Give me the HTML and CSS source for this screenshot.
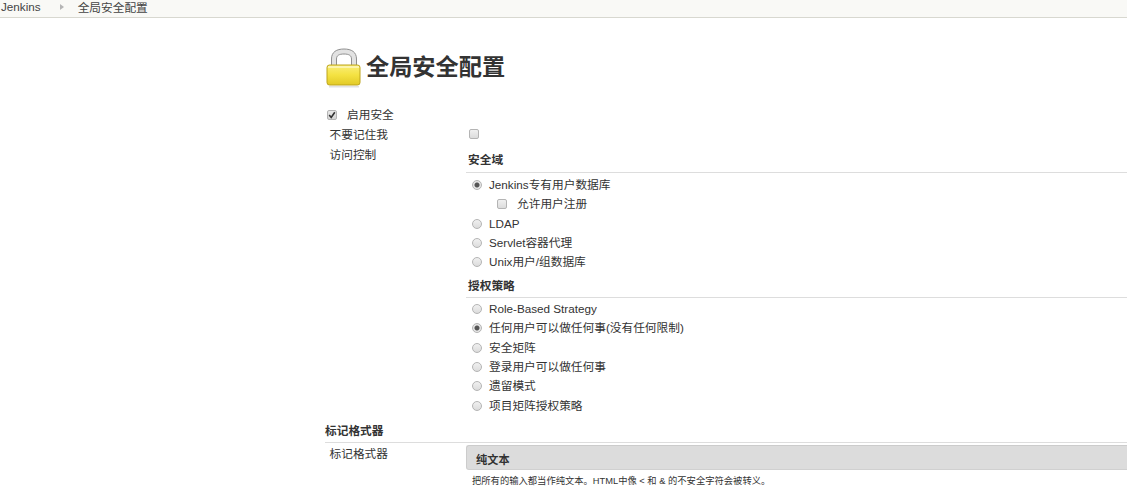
FILE: index.html
```html
<!DOCTYPE html>
<html lang="zh-CN">
<head>
  <meta charset="UTF-8">
  <title>全局安全配置</title>
  <link rel="stylesheet" href="styles.css">
</head>
<body>
  <div class="breadcrumb">
    <span>Jenkins</span>
    <span class="crumb-arrow"></span>
    <span class="crumb-current">全局安全配置</span>
  </div>

  <div class="main">
    <h1 class="title">
      <svg class="lock" width="36" height="40" viewBox="0 0 36 40">
        <defs>
          <linearGradient id="body" x1="0" y1="0" x2="0" y2="1">
            <stop offset="0" stop-color="#f9ee78"/>
            <stop offset="0.5" stop-color="#f4e242"/>
            <stop offset="1" stop-color="#e2c926"/>
          </linearGradient>
        </defs>
        <path d="M5.500 18V11C5.500 4 10.500 1 18 1S30.500 4 30.500 11v7h-5V11c0-3.500-2.500-5-7.500-5S10.500 7.500 10.500 11v7z" fill="#e2e2e2" stroke="#909090"/>
        <rect x="1" y="17" width="33" height="20" rx="2.500" fill="url(#body)" stroke="#bda41c"/>
        <rect x="2" y="18" width="31" height="2" fill="#fcf5ac"/>
        <rect x="3" y="38" width="30" height="1.500" fill="#e2e2e2"/>
      </svg>
      <span class="title-text">全局安全配置</span>
    </h1>

    <div class="row-top">
      <input type="checkbox" checked>
      <label>启用安全</label>
    </div>

    <div class="row">
      <div class="row-label">不要记住我</div>
      <div class="row-body"><input type="checkbox"></div>
    </div>

    <div class="row">
      <div class="row-label">访问控制</div>
      <div class="row-body">
        <div class="section-head first">安全域</div>
        <div class="option"><input type="radio" name="realm" checked><label>Jenkins专有用户数据库</label></div>
        <div class="option sub"><input type="checkbox"><label>允许用户注册</label></div>
        <div class="option"><input type="radio" name="realm"><label>LDAP</label></div>
        <div class="option"><input type="radio" name="realm"><label>Servlet容器代理</label></div>
        <div class="option"><input type="radio" name="realm"><label>Unix用户/组数据库</label></div>

        <div class="section-head">授权策略</div>
        <div class="option"><input type="radio" name="auth"><label>Role-Based Strategy</label></div>
        <div class="option"><input type="radio" name="auth" checked><label>任何用户可以做任何事(没有任何限制)</label></div>
        <div class="option"><input type="radio" name="auth"><label>安全矩阵</label></div>
        <div class="option"><input type="radio" name="auth"><label>登录用户可以做任何事</label></div>
        <div class="option"><input type="radio" name="auth"><label>遗留模式</label></div>
        <div class="option"><input type="radio" name="auth"><label>项目矩阵授权策略</label></div>
      </div>
    </div>

    <div class="section-head outer">标记格式器</div>
    <div class="row">
      <div class="row-label">标记格式器</div>
      <div class="row-body">
        <div class="select-box">纯文本</div>
        <div class="help">把所有的输入都当作纯文本。HTML中像 &lt; 和 &amp; 的不安全字符会被转义。</div>
      </div>
    </div>
  </div>
</body>
</html>
```

FILE: styles.css
```css
/* Reset and Global Styles */
* {
  margin: 0;
  padding: 0;
  box-sizing: border-box;
}
body {
  font-family: "Liberation Sans", "Noto Sans CJK SC", sans-serif;
  font-size: 11.7px;
  color: #333;
  background: #fff;
  overflow: hidden;
}
label {
  line-height: 14px;
}

/* Breadcrumb */
.breadcrumb {
  display: flex;
  align-items: center;
  height: 18px;
  padding: 0 0 4px 1px;
  background: #f9f9f6;
  border-bottom: 1px solid #d8d8d0;
  color: #444;
}
.crumb-arrow {
  width: 0;
  height: 0;
  margin: 0 14px 0 19px;
  border-left: 4px solid #b5b5b5;
  border-top: 3px solid transparent;
  border-bottom: 3px solid transparent;
}

/* Main column */
.main {
  margin-left: 325px;
}
.title {
  display: flex;
  align-items: center;
  gap: 4px;
  height: 40px;
  margin-top: 30px;
  padding-left: 1px;
  font-size: 23.200px;
  color: #333;
}
.title-text {
  margin-bottom: 6px;
}

/* Form rows */
.row-top {
  display: flex;
  align-items: center;
  height: 18px;
  margin-top: 18px;
  padding-left: 2px;
}
.row-top label {
  margin-left: 10px;
}
.row {
  display: flex;
}
.row-label {
  flex: none;
  width: 141px;
  padding: 4px 0 0 4.500px;
  line-height: 14px;
}
.row-body {
  flex: 1;
  min-width: 0;
  min-height: 20px;
  padding-top: 5px;
}

/* Gray browser-style checkbox and radio */
input {
  appearance: none;
  flex: none;
  width: 10px;
  height: 10px;
  border: 1px solid #b4b4b4;
  border-radius: 2px;
  background: linear-gradient(#f0f0f0, #dcdcdc);
}
input[type="radio"] {
  border-radius: 50%;
}
input[type="radio"]:checked {
  background: radial-gradient(circle, #555 0, #555 2px, #e6e6e6 3px);
}
input[type="checkbox"]:checked {
  background: url("data:image/svg+xml,%3Csvg xmlns='http://www.w3.org/2000/svg' viewBox='0 0 10 10'%3E%3Cpath d='M1.500 5l2.500 3 4.500-6.500' fill='none' stroke='%23333' stroke-width='2'/%3E%3C/svg%3E") center/100% no-repeat, linear-gradient(#e8e8e8, #d4d4d4);
}
.row-body > input {
  display: block;
  margin-left: 3px;
}

/* Section headings */
.section-head {
  height: 21.500px;
  margin: 5px 0 1px;
  line-height: 18px;
  font-weight: bold;
  padding-left: 2px;
  border-bottom: 1px solid #ddd;
}
.section-head.first {
  margin: 2px 0 3px;
}
.section-head.outer {
  height: 21px;
  margin: 7px 0 0;
  padding-left: 0;
}

/* Radio and checkbox options */
.option {
  display: flex;
  align-items: center;
  height: 19.300px;
  padding-left: 6px;
}
.option label {
  margin-left: 7px;
}
.option.sub {
  padding-left: 31px;
}
.option.sub label {
  margin-left: 10px;
}

/* Markup formatter */
.select-box {
  height: 25px;
  line-height: 29px;
  padding-left: 9px;
  margin-top: -3px;
  font-size: 11.200px;
  font-weight: bold;
  background: #dcdcdc;
  border-radius: 3px 0 0 3px;
  border-top: 1px solid #ccc;
  border-bottom: 1px solid #d0d0d0;
  border-left: 1px solid #ccc;
}
.help {
  margin-top: 3px;
  padding-left: 6px;
  font-size: 9.300px;
  color: #333;
}
```
